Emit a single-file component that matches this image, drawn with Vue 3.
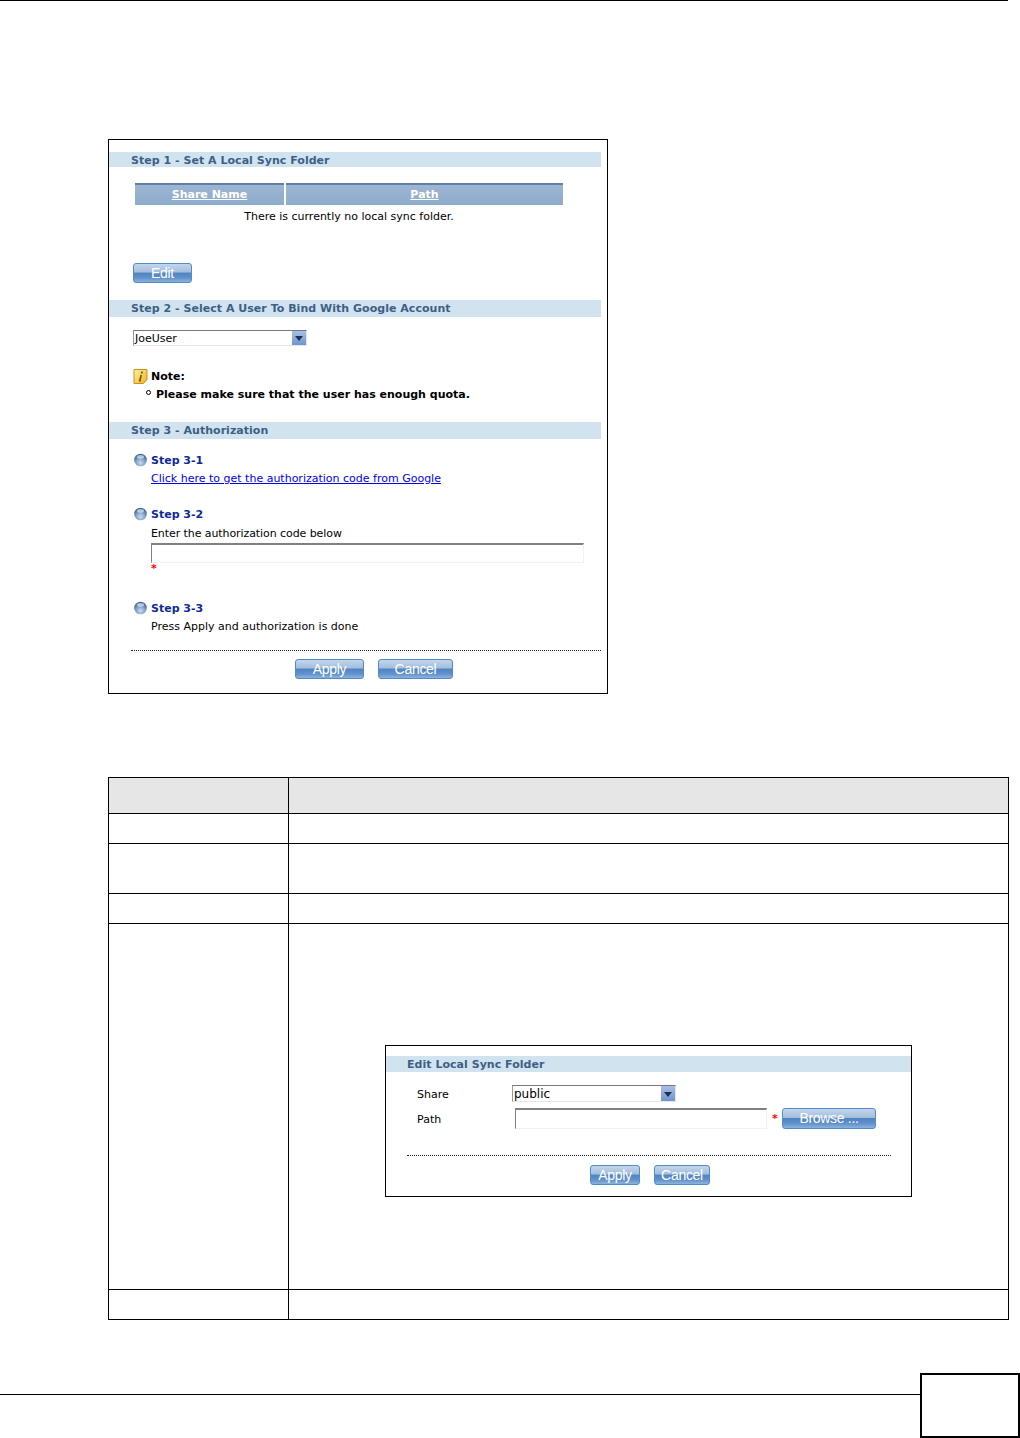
<script setup>
const rows = [
  { cls: 'row-head' },
  { cls: 'row-30' },
  { cls: 'row-50' },
  { cls: 'row-30' },
]
</script>

<template>
  <div class="page">
    <div class="top-line"></div>

    <div class="shot">
      <div class="bar bar-1">Step 1 - Set A Local Sync Folder</div>
      <div class="share-head">
        <div class="share-col share-name">Share Name</div>
        <div class="share-col share-path">Path</div>
      </div>
      <div class="empty-msg">There is currently no local sync folder.</div>
      <button class="btn btn-edit">Edit</button>

      <div class="bar bar-2">Step 2 - Select A User To Bind With Google Account</div>
      <div class="select user-select">
        <span class="select-value">JoeUser</span>
        <span class="select-arrow"><i></i></span>
      </div>
      <div class="note">
        <svg class="note-icon" width="15" height="15" viewBox="0 0 15 15">
          <defs>
            <linearGradient id="noteFill" x1="0" y1="0" x2="1" y2="1">
              <stop offset="0" stop-color="#fff0a0" />
              <stop offset="1" stop-color="#f0b422" />
            </linearGradient>
          </defs>
          <path d="M1 .5h13v10l-3.5 4H1z" fill="url(#noteFill)" stroke="#c8911a" />
          <path d="M8.2 6 6.8 11.6h1.2" fill="none" stroke="#7a5a10" stroke-width="1.7" />
          <circle cx="8.9" cy="3.6" r="1.1" fill="#7a5a10" />
        </svg>
        <span>Note:</span>
      </div>
      <div class="note-item"><i class="hollow-dot"></i>Please make sure that the user has enough quota.</div>

      <div class="bar bar-3">Step 3 - Authorization</div>

      <div class="step step-1">
        <svg class="ball" width="15" height="15" viewBox="0 0 15 15">
          <defs>
            <radialGradient id="ballFill" cx="50%" cy="72%" r="62%">
              <stop offset="0" stop-color="#c9dcef" />
              <stop offset="0.6" stop-color="#7f9fc4" />
              <stop offset="1" stop-color="#3f6896" />
            </radialGradient>
          </defs>
          <circle cx="7.5" cy="7" r="6.3" fill="url(#ballFill)" />
          <ellipse cx="7.5" cy="3.8" rx="3.6" ry="1.9" fill="#fff" opacity=".55" />
        </svg>
        <span>Step 3-1</span>
      </div>
      <a class="step-text step-link">Click here to get the authorization code from Google</a>

      <div class="step step-2">
        <svg class="ball" width="15" height="15" viewBox="0 0 15 15">
          <circle cx="7.5" cy="7" r="6.3" fill="url(#ballFill)" />
          <ellipse cx="7.5" cy="3.8" rx="3.6" ry="1.9" fill="#fff" opacity=".55" />
        </svg>
        <span>Step 3-2</span>
      </div>
      <div class="step-text step-enter">Enter the authorization code below</div>
      <div class="text-input code-input"></div>
      <div class="star code-star">*</div>

      <div class="step step-3">
        <svg class="ball" width="15" height="15" viewBox="0 0 15 15">
          <circle cx="7.5" cy="7" r="6.3" fill="url(#ballFill)" />
          <ellipse cx="7.5" cy="3.8" rx="3.6" ry="1.9" fill="#fff" opacity=".55" />
        </svg>
        <span>Step 3-3</span>
      </div>
      <div class="step-text step-press">Press Apply and authorization is done</div>

      <div class="dots"></div>
      <div class="actions">
        <button class="btn btn-apply">Apply</button>
        <button class="btn btn-cancel">Cancel</button>
      </div>
    </div>

    <div class="desc-table">
      <div v-for="(r, i) in rows" :key="i" class="desc-row" :class="r.cls">
        <div class="desc-label"></div>
        <div class="desc-value"></div>
      </div>

      <div class="desc-row row-tall">
        <div class="desc-label"></div>
        <div class="desc-value">
          <div class="edit-shot">
            <div class="bar edit-bar">Edit Local Sync Folder</div>
            <div class="edit-line edit-share">
              <span class="edit-label">Share</span>
              <div class="select share-select">
                <span class="select-value">public</span>
                <span class="select-arrow"><i></i></span>
              </div>
            </div>
            <div class="edit-line edit-path">
              <span class="edit-label">Path</span>
              <div class="text-input path-input"></div>
              <span class="star path-star">*</span>
              <button class="btn btn-browse">Browse ...</button>
            </div>
            <div class="dots edit-dots"></div>
            <div class="actions edit-actions">
              <button class="btn btn-apply-sm">Apply</button>
              <button class="btn btn-cancel-sm">Cancel</button>
            </div>
          </div>
        </div>
      </div>

      <div class="desc-row row-30">
        <div class="desc-label"></div>
        <div class="desc-value"></div>
      </div>
    </div>

    <div class="footer">
      <div class="footer-line"></div>
      <div class="page-box"></div>
    </div>
  </div>
</template>

<style>
html,
body {
  margin: 0;
  background: #fff;
}
</style>

<style scoped>
.page {
  width: 1020px;
  height: 1438px;
  overflow: hidden;
  background: #fff;
  font-family: "DejaVu Sans", Verdana, sans-serif;
  font-size: 11px;
  color: #000;
}

.top-line {
  width: 1008px;
  height: 1px;
  background: #000;
}

.shot {
  box-sizing: border-box;
  width: 500px;
  height: 555px;
  margin: 138px 0 0 108px;
  padding-top: 12px;
  border: 1px solid #000;
}

.bar {
  height: 15px;
  margin-right: 6px;
  padding-left: 22px;
  background: #d2e3f0;
  color: #3d5f85;
  font-size: 11px;
  font-weight: 700;
  letter-spacing: 0.03px;
  line-height: 15px;
  white-space: nowrap;
}

.bar-1 {
  line-height: 17px;
}

.bar-2 {
  height: 17px;
  margin-top: 17px;
  line-height: 17px;
}

.bar-3 {
  height: 17px;
  margin-top: 20px;
  line-height: 17px;
}

.share-head {
  display: flex;
  gap: 2px;
  margin: 16px 0 0 26px;
}

.share-col {
  height: 22px;
  background: linear-gradient(#5d80a8 0, #5d80a8 2px, #9db5d2 2px, #8dabcb 100%);
  color: #fff;
  font-weight: 700;
  line-height: 24px;
  text-align: center;
  text-decoration: underline;
}

.share-name {
  width: 149px;
}

.share-path {
  width: 277px;
}

.empty-msg {
  width: 428px;
  height: 22px;
  margin-left: 26px;
  line-height: 24px;
  text-align: center;
}

.btn {
  display: block;
  box-sizing: border-box;
  height: 20px;
  padding: 0 0 1px;
  border: 1px solid #4f8ccb;
  border-radius: 3px;
  background: linear-gradient(#c3d5ea 0, #a3bedd 45%, #4f84c2 50%, #5f90c9 75%, #8fb2dc 100%);
  color: #fff;
  font-family: "Liberation Sans", Arial, sans-serif;
  font-size: 14px;
  letter-spacing: -0.3px;
  line-height: 16px;
  text-align: center;
}

.btn-edit {
  width: 59px;
  margin: 36px 0 0 24px;
}

.select {
  display: flex;
  box-sizing: border-box;
  justify-content: space-between;
  border-top: 1px solid #777;
  border-left: 1px solid #999;
  border-right: 1px solid #e6e6e6;
  border-bottom: 1px solid #e6e6e6;
  background: #fff;
}

.select-value {
  padding-left: 1px;
  line-height: 16px;
}

.select-arrow {
  display: flex;
  width: 14px;
  align-items: center;
  justify-content: center;
  background: linear-gradient(#a9c0e6, #6f93cf);
}

.select-arrow i {
  width: 0;
  height: 0;
  margin-top: 1px;
  border-top: 5px solid #222f4a;
  border-left: 4px solid transparent;
  border-right: 4px solid transparent;
}

.user-select {
  width: 174px;
  height: 16px;
  margin: 13px 0 0 24px;
}

.note {
  display: flex;
  height: 15px;
  margin: 23px 0 0 24px;
  align-items: center;
  gap: 3px;
  font-weight: 700;
}

.note-item {
  display: flex;
  height: 16px;
  margin: 2px 0 0 37px;
  align-items: center;
  gap: 5px;
  font-weight: 700;
  white-space: nowrap;
}

.hollow-dot {
  box-sizing: border-box;
  width: 5px;
  height: 5px;
  margin-top: -3px;
  border: 1px solid #000;
  border-radius: 50%;
}

.step {
  display: flex;
  height: 15px;
  margin-left: 24px;
  align-items: center;
  gap: 3px;
  color: #0e2a96;
  font-weight: 700;
}

.step-1 {
  margin-top: 14px;
}

.step-2 {
  margin-top: 22px;
}

.step-3 {
  margin-top: 28px;
}

.step-text {
  display: block;
  height: 14px;
  margin-left: 42px;
  line-height: 16px;
  white-space: nowrap;
}

.step-link {
  width: fit-content;
  margin-top: 3px;
  color: #0000ee;
  text-decoration: underline;
}

.step-enter {
  margin-top: 4px;
  letter-spacing: -0.08px;
}

.step-press {
  margin-top: 3px;
}

.text-input {
  box-sizing: border-box;
  border-top: 2px solid #808080;
  border-left: 1px solid #808080;
  border-right: 1px solid #f1f1f1;
  border-bottom: 1px solid #f1f1f1;
  background: #fff;
}

.code-input {
  width: 433px;
  height: 20px;
  margin: 3px 0 0 42px;
}

.star {
  color: #ff0000;
  font-size: 11px;
  font-weight: 700;
}

.code-star {
  height: 10px;
  margin-left: 42px;
  line-height: 12px;
}

.dots {
  height: 0;
  margin: 17px 6px 0 22px;
  border-top: 1px dotted #222;
}

.actions {
  display: flex;
  margin-top: 8px;
  padding-left: 186px;
  gap: 14px;
}

.btn-apply {
  width: 69px;
}

.btn-cancel {
  width: 75px;
}

.desc-table {
  box-sizing: border-box;
  width: 901px;
  margin: 83px 0 0 108px;
  border-left: 1px solid #000;
  border-right: 1px solid #000;
  border-bottom: 1px solid #000;
}

.desc-row {
  display: grid;
  box-sizing: border-box;
  grid-template-columns: 180px 1fr;
  border-top: 1px solid #000;
}

.desc-label {
  border-right: 1px solid #000;
}

.row-head {
  height: 36px;
  background: #e6e6e6;
}

.row-30 {
  height: 30px;
}

.row-50 {
  height: 50px;
}

.row-tall {
  height: 366px;
}

.edit-shot {
  box-sizing: border-box;
  width: 527px;
  height: 152px;
  margin: 121px 0 0 96px;
  padding-top: 10px;
  border: 1px solid #000;
}

.edit-bar {
  height: 16px;
  margin-right: 0;
  padding-left: 21px;
  line-height: 18px;
}

.edit-line {
  display: flex;
  margin-left: 31px;
  align-items: center;
}

.edit-share {
  height: 17px;
  margin-top: 13px;
}

.edit-path {
  height: 21px;
  margin-top: 6px;
}

.edit-label {
  width: 95px;
  flex: none;
  padding-top: 2px;
}

.share-select {
  width: 164px;
  height: 17px;
}

.share-select .select-value {
  font-size: 12px;
  line-height: 16px;
}

.path-input {
  width: 252px;
  height: 21px;
  margin-left: 3px;
}

.path-star {
  width: 15px;
  padding-left: 5px;
  box-sizing: border-box;
}

.btn-browse {
  width: 94px;
  height: 21px;
}

.edit-dots {
  margin: 26px 20px 0 21px;
}

.edit-actions {
  margin-top: 9px;
  padding-left: 204px;
}

.btn-apply-sm {
  width: 50px;
}

.btn-cancel-sm {
  width: 56px;
}

.footer {
  display: flex;
  margin-top: 53px;
}

.footer-line {
  width: 920px;
  height: 1px;
  margin-top: 21px;
  background: #000;
}

.page-box {
  box-sizing: border-box;
  width: 100px;
  height: 65px;
  border: 2px solid #000;
}
</style>
